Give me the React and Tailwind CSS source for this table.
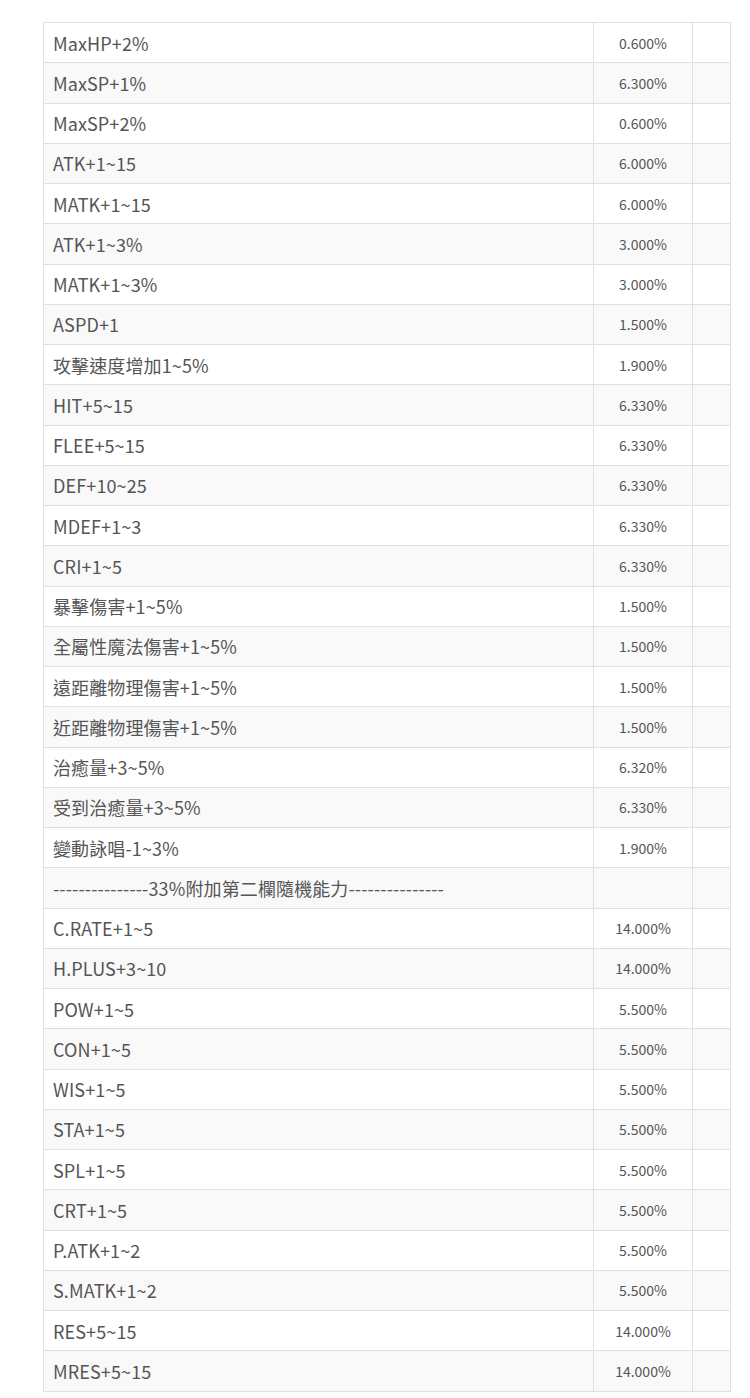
const rows = [
  ["MaxHP+2%", "0.600%"],
  ["MaxSP+1%", "6.300%"],
  ["MaxSP+2%", "0.600%"],
  ["ATK+1~15", "6.000%"],
  ["MATK+1~15", "6.000%"],
  ["ATK+1~3%", "3.000%"],
  ["MATK+1~3%", "3.000%"],
  ["ASPD+1", "1.500%"],
  ["攻擊速度增加1~5%", "1.900%"],
  ["HIT+5~15", "6.330%"],
  ["FLEE+5~15", "6.330%"],
  ["DEF+10~25", "6.330%"],
  ["MDEF+1~3", "6.330%"],
  ["CRI+1~5", "6.330%"],
  ["暴擊傷害+1~5%", "1.500%"],
  ["全屬性魔法傷害+1~5%", "1.500%"],
  ["遠距離物理傷害+1~5%", "1.500%"],
  ["近距離物理傷害+1~5%", "1.500%"],
  ["治癒量+3~5%", "6.320%"],
  ["受到治癒量+3~5%", "6.330%"],
  ["變動詠唱-1~3%", "1.900%"],
  ["---------------33%附加第二欄隨機能力---------------", ""],
  ["C.RATE+1~5", "14.000%"],
  ["H.PLUS+3~10", "14.000%"],
  ["POW+1~5", "5.500%"],
  ["CON+1~5", "5.500%"],
  ["WIS+1~5", "5.500%"],
  ["STA+1~5", "5.500%"],
  ["SPL+1~5", "5.500%"],
  ["CRT+1~5", "5.500%"],
  ["P.ATK+1~2", "5.500%"],
  ["S.MATK+1~2", "5.500%"],
  ["RES+5~15", "14.000%"],
  ["MRES+5~15", "14.000%"],
];

export default function App() {
  return (
    <div className="min-h-screen bg-white pt-[22px] pl-[43px] font-['Noto_Sans_CJK_TC','Noto_Sans',sans-serif] text-[#555]">
      <table className="w-[688px] table-fixed border-collapse">
        <colgroup>
          <col className="w-[550px]" />
          <col className="w-[99px]" />
          <col />
        </colgroup>
        <tbody>
          {rows.map(([label, rate], i) => (
            <tr key={i} className={i % 2 === 1 ? "bg-[#f9f9f9]" : "bg-white"}>
              <td className="h-[40.25px] border border-[#e0e0e0] px-[9px] py-0 text-[18px] leading-[24px] tracking-[0.12px] whitespace-nowrap">
                {label}
              </td>
              <td className="border border-[#e0e0e0] p-0 text-center text-[14px] leading-[20px]">{rate}</td>
              <td className="border border-[#e0e0e0] p-0"></td>
            </tr>
          ))}
        </tbody>
      </table>
    </div>
  );
}
